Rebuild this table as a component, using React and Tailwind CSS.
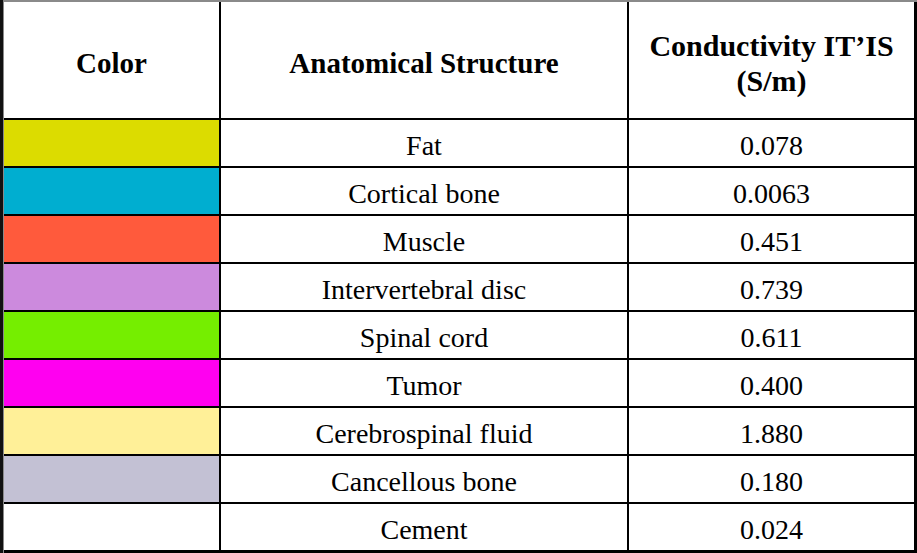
const rows = [
  { color: "bg-[#dcdc00]", name: "Fat", value: "0.078" },
  { color: "bg-[#00aed0]", name: "Cortical bone", value: "0.0063" },
  { color: "bg-[#ff5a3c]", name: "Muscle", value: "0.451" },
  { color: "bg-[#cc8add]", name: "Intervertebral disc", value: "0.739" },
  { color: "bg-[#75ee00]", name: "Spinal cord", value: "0.611" },
  { color: "bg-[#ff00f0]", name: "Tumor", value: "0.400" },
  { color: "bg-[#fff098]", name: "Cerebrospinal fluid", value: "1.880" },
  { color: "bg-[#c3c1d4]", name: "Cancellous bone", value: "0.180" },
  { color: "bg-white", name: "Cement", value: "0.024" },
];

export default function App() {
  return (
    <div className="flex w-[917px] h-[553px] bg-white font-['Liberation_Serif','Times_New_Roman',serif] text-black">
      {/* left window edge */}
      <div className="w-[3px] h-full bg-[#111]" />
      <div className="w-[1px] h-full bg-[#8a8a8a]" />

      <div className="flex flex-col flex-1">
        <div className="h-[2px] bg-[#8a8a8a]" />

        {/* TABLE */}
        <div className="grid grid-cols-[215px_406px_285px] grid-rows-[116px_repeat(9,46px)] gap-[2px] bg-black border-r-[3px] border-b-[3px] border-black">
          <div className="bg-white flex items-center justify-center pt-[8px] text-[29px] font-bold">
            Color
          </div>
          <div className="bg-white flex items-center justify-center pt-[8px] text-[29px] font-bold">
            Anatomical Structure
          </div>
          <div className="bg-white flex flex-col items-center justify-center pt-[6px] text-[30px] font-bold leading-[35px] text-center">
            <span>Conductivity IT’IS</span>
            <span>(S/m)</span>
          </div>

          {rows.map((row) => (
            <div key={row.name} className="contents">
              <div className={row.color} />
              <div className="bg-white flex items-center justify-center pt-[6px] text-[28px]">
                {row.name}
              </div>
              <div className="bg-white flex items-center justify-center pt-[6px] text-[28px]">
                {row.value}
              </div>
            </div>
          ))}
        </div>
      </div>
    </div>
  );
}
